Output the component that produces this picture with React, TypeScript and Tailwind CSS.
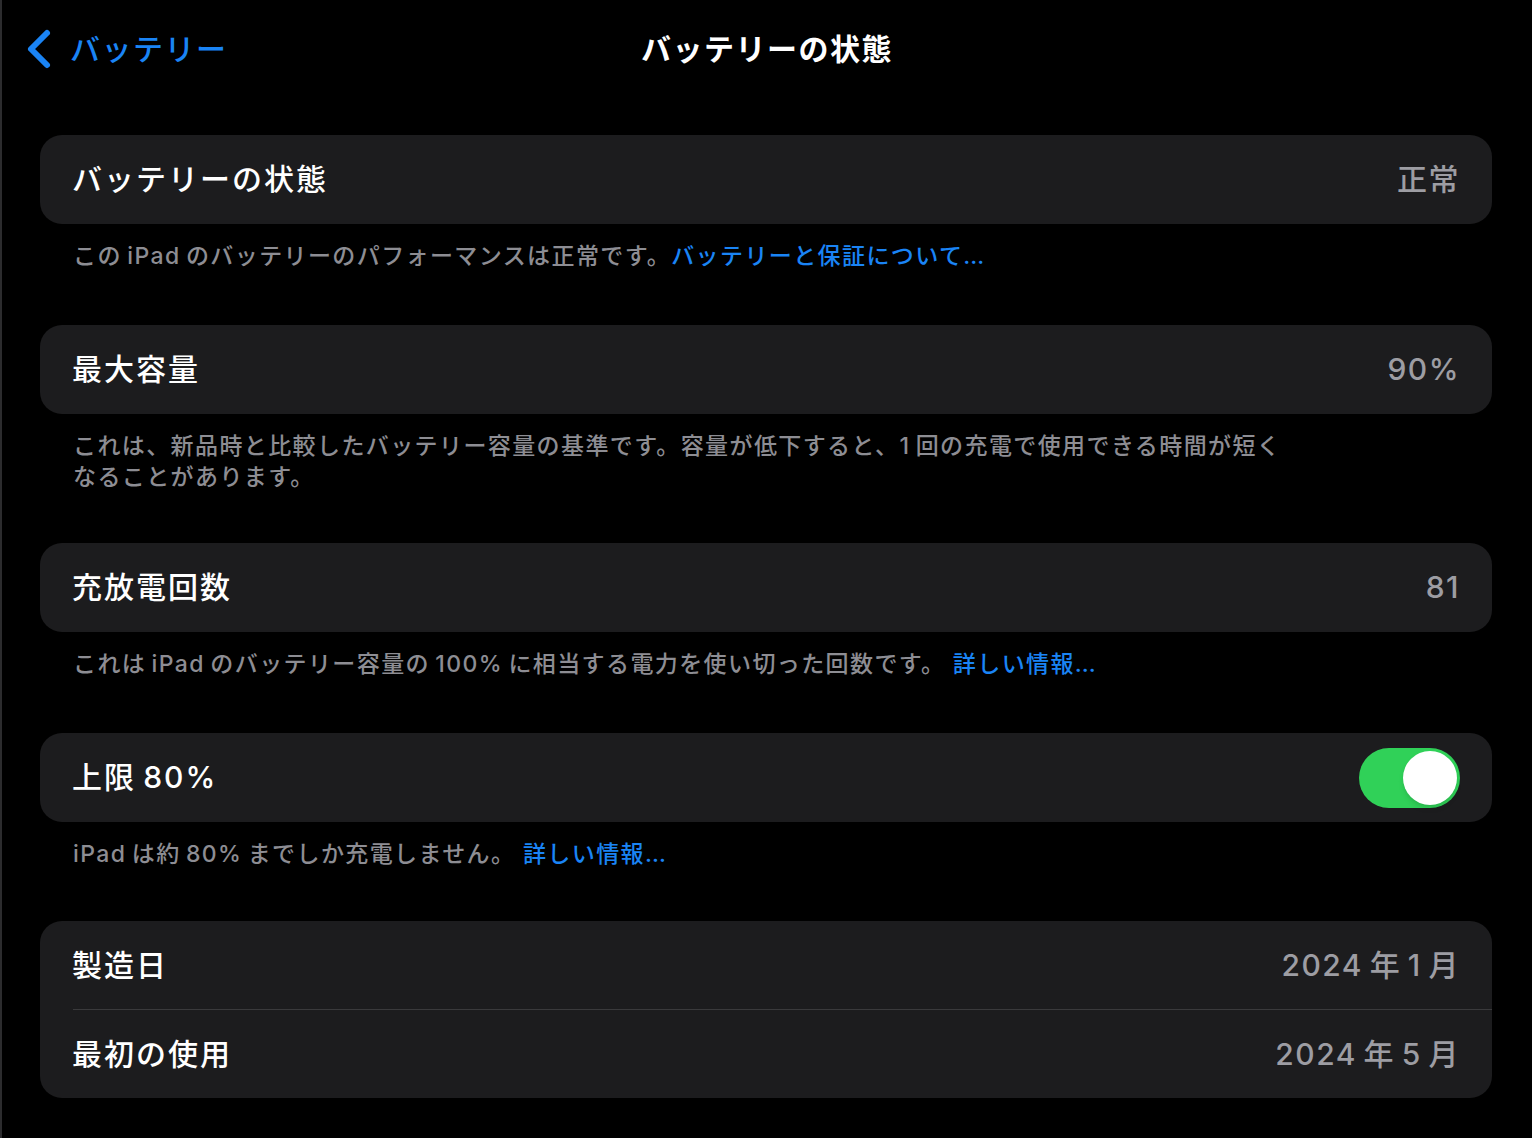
const font = { fontFamily: 'Inter, "Noto Sans CJK JP", sans-serif' }

function Row({ label, value, children, h = 'h-[89px]' }: { label: string; value?: string; children?: React.ReactNode; h?: string }) {
  return (
    <div className={`flex ${h} items-center justify-between pl-[32px] pr-[32px]`}>
      <span className="text-[30px] font-medium tracking-[2px] text-white">{label}</span>
      {value && <span className="text-[30px] font-medium tracking-[1.5px] text-[#9d9da3]">{value}</span>}
      {children}
    </div>
  )
}

function Footer({ children, className = 'mb-[53px]' }: { children: React.ReactNode; className?: string }) {
  return (
    <p className={`mt-[17px] pl-[33px] text-[23px] leading-[31px] font-medium tracking-[1.4px] text-[#8d8d93] ${className}`}>
      {children}
    </p>
  )
}

function Link({ children }: { children: React.ReactNode }) {
  return <span className="text-[#1a84f5]">{children}</span>
}

export default function App() {
  return (
    <div className="min-h-[1138px] w-full border-l-2 border-[#2c2c2e] bg-black" style={font}>
      <header className="relative flex h-[98px] items-center">
        <div className="flex items-center pl-[23px] text-[#1a84f5]">
          <svg width="28" height="42" viewBox="0 0 28 42" fill="none">
            <path d="M22 5 L6 21 L22 37" stroke="currentColor" strokeWidth="6" strokeLinecap="round" strokeLinejoin="round" />
          </svg>
          <span className="ml-[17px] text-[30px] font-medium tracking-[1.5px]">バッテリー</span>
        </div>
        <h1 className="absolute left-1/2 -translate-x-1/2 text-[30px] font-bold tracking-[1.5px] text-white">
          バッテリーの状態
        </h1>
      </header>

      <main className="pl-[38px] pr-[40px] pt-[37px]">
        <section className="rounded-[22px] bg-[#1c1c1e]">
          <Row label="バッテリーの状態" value="正常" />
        </section>
        <Footer>
          この{'\u2009'}iPad{'\u2009'}のバッテリーのパフォーマンスは正常です。<Link>バッテリーと保証について…</Link>
        </Footer>

        <section className="rounded-[22px] bg-[#1c1c1e]">
          <Row label="最大容量" value="90%" />
        </section>
        <Footer className="mb-[50px]">
          これは、新品時と比較したバッテリー容量の基準です。容量が低下すると、1{'\u2009'}回の充電で使用できる時間が短く
          <br />
          なることがあります。
        </Footer>

        <section className="rounded-[22px] bg-[#1c1c1e]">
          <Row label="充放電回数" value="81" />
        </section>
        <Footer>
          これは{'\u2009'}iPad{'\u2009'}のバッテリー容量の{'\u2009'}100%{'\u2009'}に相当する電力を使い切った回数です。 <Link>詳しい情報…</Link>
        </Footer>

        <section className="rounded-[22px] bg-[#1c1c1e]">
          <Row label={'上限\u200980%'}>
            <div className="flex h-[60px] w-[101px] items-center justify-end rounded-full bg-[#30d158] p-[3px]">
              <div className="h-[54px] w-[54px] rounded-full bg-white shadow-md" />
            </div>
          </Row>
        </section>
        <Footer className="mb-[51px]">
          iPad{'\u2009'}は約{'\u2009'}80%{'\u2009'}までしか充電しません。 <Link>詳しい情報…</Link>
        </Footer>

        <section className="rounded-[22px] bg-[#1c1c1e]">
          <Row label="製造日" value={'2024\u2009年\u20091\u2009月'} h="h-[88px]" />
          <div className="ml-[33px] h-px bg-[#3a3a3c]" />
          <Row label="最初の使用" value={'2024\u2009年\u20095\u2009月'} h="h-[88px]" />
        </section>
      </main>
    </div>
  )
}
